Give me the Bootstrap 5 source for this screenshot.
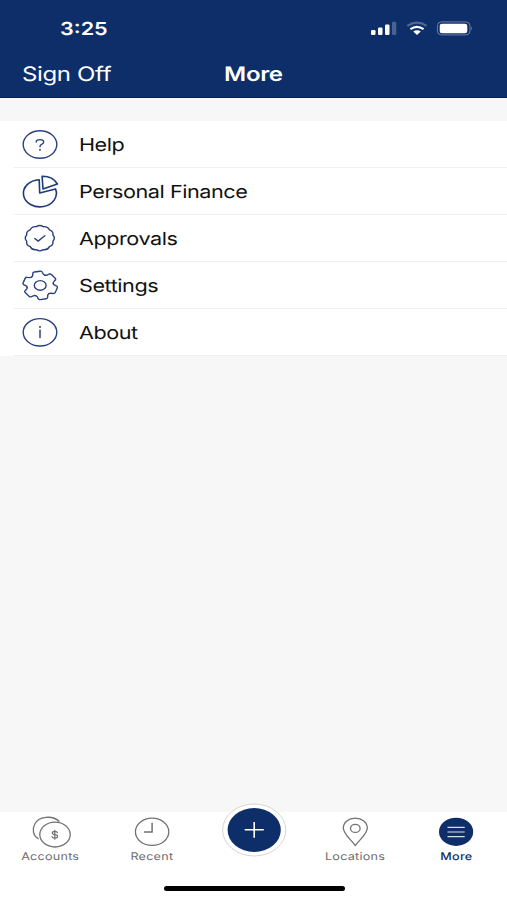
<!DOCTYPE html>
<html lang="en">
<head>
<meta charset="utf-8">
<meta name="viewport" content="width=device-width, initial-scale=1">
<title>More</title>
<link rel="stylesheet" href="https://cdn.jsdelivr.net/npm/bootstrap@5.3.0/dist/css/bootstrap.min.css">
<style>
  :root { --navy: #0e2e69; }
  body { font-family: Inter, "Liberation Sans", sans-serif; background: #f7f7f7; color: #111; text-rendering: geometricPrecision; }
  svg { display: block; flex: none; }
  .top-area { height: 98px; background: var(--navy); border-bottom: 1px solid #0a2054; }
  .status-row { height: 50px; padding: 8px 34px 0 60px; }
  .status-row svg { margin-top: -1px; }
  .title-row { height: 47px; display: grid; grid-template-columns: 1fr auto 1fr; padding: 1px 22px 0 22px; }
  .wide { display: inline-block; white-space: nowrap; transform: scaleX(1.2); transform-origin: left center; }
  .mid { transform-origin: center; }
  .clock { font-size: 18px; font-weight: 600; }
  .bar-text { font-size: 20px; line-height: 24px; letter-spacing: -.3px; }
  .menu { margin-top: 23px; background: #fff; }
  .menu-row { height: 47px; padding-left: 20px; background: linear-gradient(#efeff0, #efeff0) 14px 100% / 100% 1px no-repeat; color: #111; text-decoration: none; }
  .menu-row svg { margin-bottom: 2px; }
  .menu-row .wide { margin-left: 19px; padding-top: 3px; font-size: 18px; line-height: 24px; letter-spacing: -.37px; }
  .ln { fill: none; stroke: #2b427f; stroke-width: 1.4; stroke-linecap: round; stroke-linejoin: round; }
  .tabs { height: 88px; background: #fff; }
  .tab-item { flex: 1 1 0; color: #6e6e70; font-size: 10.5px; line-height: 13px; letter-spacing: .2px; text-decoration: none; }
  .tab-item.current { color: var(--navy); font-weight: 500; }
  .tab-item svg { width: 64px; height: 38px; overflow: visible; }
  .gr { fill: none; stroke: #727274; stroke-width: 1.3; stroke-linecap: round; stroke-linejoin: round; }
  .home-line { width: 181px; height: 5px; border-radius: 3px; background: #000; margin: 0 0 9px 1px; }
</style>
</head>
<body>
<div class="d-flex flex-column vh-100 overflow-hidden">
  <header class="top-area text-white">
    <div class="status-row d-flex align-items-center justify-content-between">
      <span class="wide clock">3:25</span>
      <svg width="104" height="20" viewBox="369 19 104 20">
        <g fill="#fff">
          <rect x="371" y="30" width="4.5" height="5" rx="1.2"/>
          <rect x="378" y="27.5" width="4.5" height="7.5" rx="1.2"/>
          <rect x="385" y="24.5" width="4.5" height="10.5" rx="1.2"/>
          <rect x="392" y="21.7" width="4.3" height="13.3" rx="1.2" opacity=".25"/>
        </g>
        <g fill="none" stroke="#fff" stroke-width="2.1">
          <path d="M407.3 25.8Q417 19.4 426.7 25.8" opacity=".28"/>
          <path d="M410.4 29.2Q417 24.6 423.6 29.2"/>
        </g>
        <path d="M413.2 31.6Q417 29 420.8 31.6L417 35Z" fill="#fff"/>
        <rect x="437.4" y="21.9" width="32.6" height="13" rx="4" fill="none" stroke="#fff" stroke-opacity=".38"/>
        <rect x="439.7" y="23.8" width="27.6" height="9.4" rx="2.3" fill="#fff"/>
        <path d="M471.4 26.5Q473 28.4 471.4 30.4Z" fill="#fff" opacity=".5"/>
      </svg>
    </div>
    <div class="title-row align-items-center">
      <span><span class="wide bar-text">Sign Off</span></span>
      <span class="wide mid bar-text fw-semibold">More</span>
      <span></span>
    </div>
  </header>

  <main class="flex-grow-1">
    <nav class="menu">
      <a class="menu-row d-flex align-items-center" href="#">
        <svg class="ln" width="40" height="46" viewBox="20 121 40 46"><ellipse cx="40" cy="144.5" rx="16.8" ry="13.7"/><path d="M36.2 142Q36.2 139.6 40 139.6Q43.7 139.6 43.7 142Q43.7 143.4 41.6 144.4Q40 145.2 40 146.8"/><path d="M40 149.7V149.9" stroke-width="1.7"/></svg>
        <span class="wide">Help</span>
      </a>
      <a class="menu-row d-flex align-items-center" href="#">
        <svg class="ln" width="40" height="46" viewBox="20 168 40 46"><g stroke="#1d3a7c" stroke-width="1.6"><path d="M39.2 179.7L39.7 193L55.5 188.9A16.5 13.6 0 1 1 39.2 179.7Z"/><path d="M42.1 176.2L43 189L57.4 184A16.5 13.6 0 0 0 42.1 176.2Z"/></g></svg>
        <span class="wide">Personal Finance</span>
      </a>
      <a class="menu-row d-flex align-items-center" href="#">
        <svg class="ln" width="40" height="46" viewBox="20 215 40 46"><g transform="translate(39.8 238.2)"><path d="M13.1 -3.1Q16 0 13.1 3.1Q13.9 6.9 9.6 8.4Q8 12 3.5 11.5Q0 13.8 -3.5 11.5Q-8 12 -9.6 8.4Q-13.9 6.9 -13.1 3.1Q-16 0 -13.1 -3.1Q-13.9 -6.9 -9.6 -8.4Q-8 -12 -3.5 -11.5Q0 -13.8 3.5 -11.5Q8 -12 9.6 -8.4Q13.9 -6.9 13.1 -3.1Z"/><path d="M-5 .3L-1.7 2.9L5 -2.5"/></g></svg>
        <span class="wide">Approvals</span>
      </a>
      <a class="menu-row d-flex align-items-center" href="#">
        <svg class="ln" width="40" height="46" viewBox="20 262 40 46">
          <defs><path id="tooth" vector-effect="non-scaling-stroke" d="M9.45 -5.45Q10 -4.5 11 -4.3L12.6 -4Q14 -3.8 14 -2.4V2.4Q14 3.8 12.6 4L11 4.3Q10 4.5 9.45 5.45"/></defs>
          <g transform="translate(40.2 285.4) scale(1.22 1) rotate(20)"><use href="#tooth"/><use href="#tooth" transform="rotate(60)"/><use href="#tooth" transform="rotate(120)"/><use href="#tooth" transform="rotate(180)"/><use href="#tooth" transform="rotate(240)"/><use href="#tooth" transform="rotate(300)"/></g>
          <ellipse cx="40.2" cy="285.4" rx="5.9" ry="4.8"/></svg>
        <span class="wide">Settings</span>
      </a>
      <a class="menu-row d-flex align-items-center" href="#">
        <svg class="ln" width="40" height="46" viewBox="20 309 40 46"><ellipse cx="40" cy="332.3" rx="16.8" ry="13.7"/><path d="M40 330.2V337.6" stroke-width="1.5"/><path d="M40 326.9V327.1" stroke-width="2"/></svg>
        <span class="wide">About</span>
      </a>
    </nav>
  </main>

  <footer class="tabs d-flex flex-column justify-content-between align-items-center">
    <div class="d-flex w-100">
      <a class="tab-item d-flex flex-column align-items-center" href="#">
        <svg class="gr" viewBox="19 812 64 38"><path d="M38.3 838.8C33.2 836 31.8 829.5 34.7 824.3C38.5 816.2 52.5 815 59 821.2"/><ellipse cx="55" cy="834.6" rx="15.2" ry="12.4"/><path d="M57.5 832.7Q57 831.4 54.8 831.4Q52.3 831.4 52.3 833Q52.3 834.4 54.8 834.6Q57.6 834.9 57.6 836.5Q57.6 838.1 54.8 838.1Q52.3 838.1 52 836.7M54.8 830.3V839.2" stroke-width="1.2"/></svg>
        <span class="wide mid">Accounts</span>
      </a>
      <a class="tab-item d-flex flex-column align-items-center" href="#">
        <svg class="gr" viewBox="120.3 812 64 38"><ellipse cx="152.4" cy="831.8" rx="16.7" ry="13.6"/><path d="M152.4 822.8V832H144.3" stroke-width="1.5" stroke-linecap="butt" stroke-linejoin="miter"/></svg>
        <span class="wide mid">Recent</span>
      </a>
      <a class="tab-item d-flex flex-column align-items-center" href="#" aria-label="Add">
        <svg viewBox="222 812 64 38"><ellipse cx="254.2" cy="830" rx="31.6" ry="26" fill="#fff" stroke="#d6d6d8" stroke-width="1"/><ellipse cx="254.2" cy="830" rx="26.6" ry="21.9" fill="#0e2e69"/><path d="M244.7 829.8H263.8M254.2 822V837.8" stroke="#fff" stroke-width="1.6"/></svg>
      </a>
      <a class="tab-item d-flex flex-column align-items-center" href="#">
        <svg class="gr" viewBox="323 812 64 38"><path d="M355.3 845.6C351.3 839.8 343.3 834 343.3 828C343.3 822.2 348.6 818.2 355.3 818.2C362 818.2 367.3 822.2 367.3 828C367.3 834 359.3 839.8 355.3 845.6Z"/><ellipse cx="355.3" cy="828.4" rx="4.8" ry="4"/></svg>
        <span class="wide mid">Locations</span>
      </a>
      <a class="tab-item current d-flex flex-column align-items-center" href="#">
        <svg viewBox="424.3 812 64 38"><ellipse cx="456.4" cy="831.8" rx="17.1" ry="14.1" fill="#0e2e69"/><path d="M447.8 827.4H465M447.8 832H465M447.8 836.6H465" stroke="#d5dcea" stroke-width="1.1"/></svg>
        <span class="wide mid">More</span>
      </a>
    </div>
    <div class="home-line"></div>
  </footer>
</div>
<script src="https://cdn.jsdelivr.net/npm/bootstrap@5.3.0/dist/js/bootstrap.bundle.min.js"></script>
</body>
</html>
